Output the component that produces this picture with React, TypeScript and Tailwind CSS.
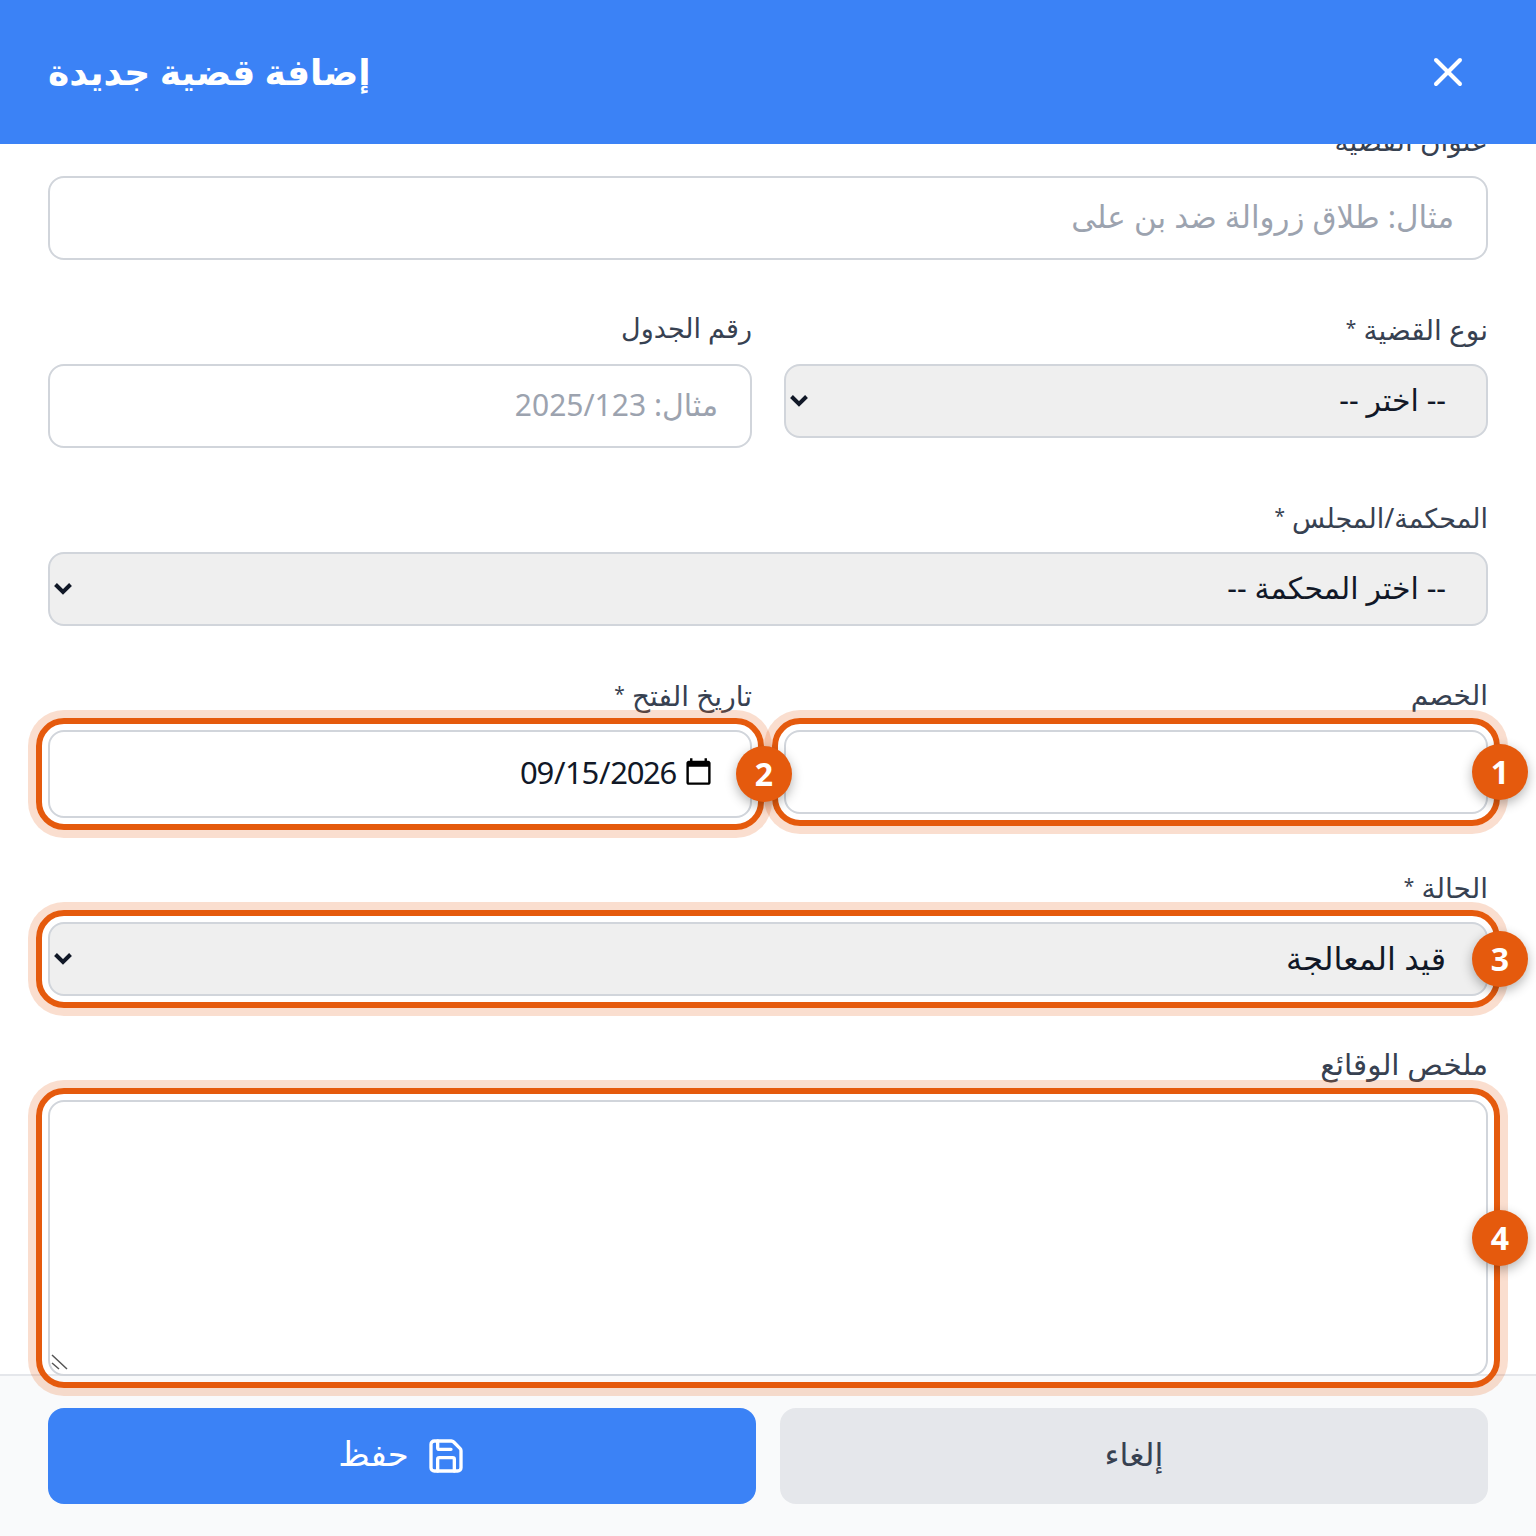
import type { ReactNode } from "react";
import { Save, X } from "lucide-react";

const inputClass =
  "block w-full rounded-2xl border-2 border-[#d1d5db] bg-white px-[32px] pb-[4px] text-[#111827] placeholder:text-[#9ca3af] outline-none";
const selectClass =
  "block w-full h-[74px] appearance-none rounded-2xl border-2 border-[#d1d5db] bg-[#efefef] pr-[40px] pl-[32px] pb-[3px] text-[#111827] outline-none";

function Highlight({ n }: { n: number }) {
  return (
    <>
      <div className="pointer-events-none absolute -inset-[12px] z-20 rounded-[28px] border-[6px] border-[#e55a0d] shadow-[0_0_0_8px_rgba(229,90,13,0.2)]" />
      <div className="absolute top-1/2 right-[-40px] z-30 flex h-[56px] w-[56px] -translate-y-1/2 items-center justify-center rounded-full bg-[#e55a0d] text-[32px] font-bold text-white shadow-[0_4px_12px_rgba(0,0,0,0.3)]">
        {n}
      </div>
    </>
  );
}

function Field({
  label,
  required,
  mark,
  labelSize = "text-[28px]",
  children,
}: {
  label: string;
  required?: boolean;
  mark?: number;
  labelSize?: string;
  children: ReactNode;
}) {
  return (
    <div>
      <label className={"mb-[16px] block h-[40px] leading-[40px] text-[#374151] " + labelSize}>
        {label}
        {required ? (
          <>
            {" "}
            <span className="align-[5px] text-[19px]">*</span>
          </>
        ) : null}
      </label>
      <div className="relative">
        {children}
        {mark ? <Highlight n={mark} /> : null}
      </div>
    </div>
  );
}

function Chevron() {
  return (
    <svg
      className="pointer-events-none absolute top-[28px] left-[6px] h-[18px] w-[18px] text-[#111827]"
      viewBox="0 0 18 18"
      fill="none"
      stroke="currentColor"
      strokeWidth="4"
    >
      <path d="M1.5 4.5 9 12l7.5-7.5" />
    </svg>
  );
}

function Select({ value, size = "text-[30px]" }: { value: string; size?: string }) {
  return (
    <>
      <select className={selectClass + " " + size} defaultValue={value}>
        <option>{value}</option>
      </select>
      <Chevron />
    </>
  );
}

export default function App() {
  return (
    <div
      dir="rtl"
      className="relative flex h-[1536px] w-[1536px] flex-col overflow-hidden bg-white font-['Noto_Sans','DejaVu_Sans',sans-serif]"
    >
      <header
        dir="ltr"
        className="relative z-10 flex h-[144px] shrink-0 items-center justify-between bg-[#3b82f6] px-[48px]"
      >
        <h2 dir="rtl" className="text-[36px] font-bold text-white">
          إضافة قضية جديدة
        </h2>
        <button className="p-[16px] text-white">
          <X size={48} />
        </button>
      </header>

      <main className="h-[1230px] shrink-0 px-[48px]">
        <form className="-mt-[24px] flex flex-col gap-[48px]">
          <Field label="عنوان القضية">
            <input
              className={inputClass + " h-[84px] text-[31px]"}
              placeholder="مثال: طلاق زروالة ضد بن على"
            />
          </Field>

          <div className="grid grid-cols-2 items-start gap-[32px]">
            <Field label="نوع القضية" required>
              <Select value="-- اختر --" />
            </Field>
            <Field label="رقم الجدول" labelSize="text-[27px]">
              <input
                className={inputClass + " h-[84px] text-[30px]"}
                placeholder="مثال: 2025/123"
              />
            </Field>
          </div>

          <Field label="المحكمة/المجلس" required labelSize="text-[27px]">
            <Select value="-- اختر المحكمة --" />
          </Field>

          <div className="grid grid-cols-2 items-start gap-[32px]">
            <Field label="الخصم" mark={1}>
              <input className={inputClass + " h-[84px] text-[30px]"} />
            </Field>
            <Field label="تاريخ الفتح" required mark={2}>
              <input
                type="date"
                defaultValue="2026-09-15"
                className={
                  inputClass +
                  " h-[88px] pr-[36px] pl-[469px] text-[31px] tracking-[-1.3px] [&::-webkit-calendar-picker-indicator]:m-0 [&::-webkit-calendar-picker-indicator]:h-[31px] [&::-webkit-calendar-picker-indicator]:w-[31px] [&::-webkit-calendar-picker-indicator]:p-0"
                }
              />
            </Field>
          </div>

          <Field label="الحالة" required mark={3}>
            <Select value="قيد المعالجة" size="text-[32px]" />
          </Field>

          <Field label="ملخص الوقائع" mark={4} labelSize="text-[29.5px]">
            <textarea className={inputClass + " h-[276px] resize-none text-[30px]"} />
            <svg
              className="pointer-events-none absolute bottom-[4px] left-[3px] h-[18px] w-[18px] text-[#555555]"
              viewBox="0 0 18 18"
              fill="none"
              stroke="currentColor"
              strokeWidth="1.5"
            >
              <path d="M1 1l15 14M1 9l7 6" />
            </svg>
          </Field>
        </form>
      </main>

      <footer className="grid shrink-0 grid-cols-2 gap-[24px] border-t-2 border-[#e5e7eb] bg-[#f9fafb] px-[48px] py-[32px]">
        <button className="h-[96px] rounded-2xl bg-[#e5e7eb] pb-[4px] text-[32px] text-[#374151]">
          إلغاء
        </button>
        <button className="flex h-[96px] items-center justify-center gap-[17px] rounded-2xl bg-[#3b82f6] text-[34px] text-white">
          <Save size={40} />
          <span className="pb-[5px]">حفظ</span>
        </button>
      </footer>
    </div>
  );
}
